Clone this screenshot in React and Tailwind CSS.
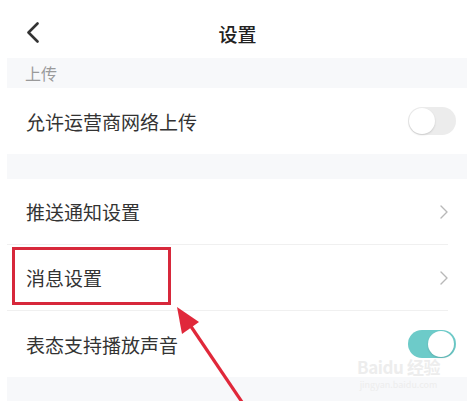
import React from "react";

const Toggle = ({ on }) => (
  <div
    className={`relative w-[48px] h-[28px] rounded-full ${
      on ? "bg-[#6dcbc9]" : "bg-[#ececec]"
    }`}
  >
    <div
      className={`absolute top-[1px] w-[26px] h-[26px] rounded-full bg-white shadow-[0_1px_2px_rgba(0,0,0,0.15)] ${
        on ? "right-[2px]" : "left-[1px]"
      }`}
    />
  </div>
);

const Chevron = () => (
  <svg width="8" height="14" viewBox="0 0 8 14" fill="none">
    <path d="M1 1l6 6-6 6" stroke="#b8b8b8" strokeWidth="1.4" strokeLinecap="round" strokeLinejoin="round" />
  </svg>
);

const Row = ({ label, right, divider }) => (
  <div className={`flex items-center justify-between h-[66px] pl-[19px] ${divider ? "border-b border-[#f0f0f0]" : ""}`}>
    <span className="text-[19px] text-[#333] leading-none">{label}</span>
    {right}
  </div>
);

export default function App() {
  return (
    <div
      className="relative w-[475px] h-[401px] overflow-hidden bg-white"
      style={{ fontFamily: '"Noto Sans CJK SC", "Noto Sans", sans-serif' }}
    >
      {/* header */}
      <div className="relative flex items-center justify-center h-[58px]">
        <svg className="absolute left-[26px] top-[22px]" width="14" height="21" viewBox="0 0 14 21" fill="none">
          <path d="M11.5 1.5L2.5 10.5l9 9" stroke="#333" strokeWidth="2.6" strokeLinecap="round" strokeLinejoin="round" />
        </svg>
        <span className="text-[19px] font-medium text-[#222] leading-none mt-[8px]">设置</span>
      </div>

      <div className="ml-[7px] mr-[8px]">
        <div className="flex items-center h-[30px] pl-[18px] bg-[#f7f8fa]">
          <span className="text-[16px] text-[#9a9a9a] leading-none">上传</span>
        </div>

        <div className="pr-[11px]">
          <Row label="允许运营商网络上传" right={<Toggle on={false} />} />
        </div>

        <div className="h-[25px] bg-[#f7f8fa]" />

        <div className="pr-[19px]">
          <Row label="推送通知设置" right={<Chevron />} divider />
          <Row label="消息设置" right={<Chevron />} divider />
        </div>
        <div className="pr-[11px]">
          <Row label="表态支持播放声音" right={<Toggle on />} />
        </div>

        <div className="h-[25px] bg-[#f7f8fa]" />
      </div>

      {/* watermark */}
      <div className="absolute left-[357px] top-[358px] flex flex-col items-center gap-[5px] text-[#ededed]">
        <span className="text-[17px] font-bold tracking-tight leading-[17px]">Baidu 经验</span>
        <span className="text-[9px] leading-[9px]">jingyan.baidu.com</span>
      </div>

      {/* annotation box */}
      <div className="absolute left-[12px] top-[247px] w-[159px] h-[58px] border-[3px] border-[#d7283b]" />

      {/* annotation arrow */}
      <svg className="absolute left-0 top-0" width="475" height="401" viewBox="0 0 475 401">
        <line x1="242" y1="402" x2="190" y2="325" stroke="#e0283a" strokeWidth="3.2" />
        <polygon points="177,307 199,322 182,334" fill="#e0283a" />
      </svg>
    </div>
  );
}
